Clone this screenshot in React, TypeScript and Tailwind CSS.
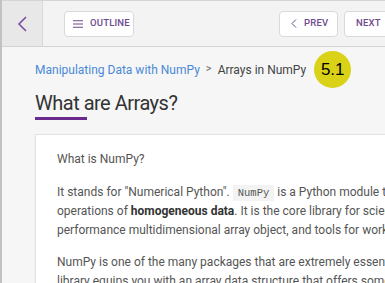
import React from 'react';

const purple = 'text-[#6e4a8e]';

function NavButton({ children, className = '' }: { children: React.ReactNode; className?: string }) {
  return (
    <button
      className={`h-[26px] flex items-center gap-[7px] bg-white border border-[#d9d9d9] rounded-[4px] text-[9.5px] font-medium tracking-[0.2px] ${purple} ${className}`}
    >
      {children}
    </button>
  );
}

export default function App() {
  return (
    <div className="w-[385px] h-[283px] overflow-hidden bg-[#f6f6f6] border-l-2 border-[#c2c2c2] font-['Roboto',sans-serif]">
      {/* top bar */}
      <div className="h-[47px] flex bg-[#f3f3f3] border-t border-b border-[#d4d4d4]">
        <div className="w-[41px] shrink-0 flex items-center justify-center bg-[#e8e8e8] border-r border-[#dadada]">
          <svg width="12" height="16" viewBox="0 0 12 16" fill="none">
            <path d="M10 1 L3 8 L10 15" stroke="#7a4f9e" strokeWidth="1.6" />
          </svg>
        </div>
        <div className="flex-1 flex items-center pl-[21px] pr-0 gap-[6px]">
          <NavButton className="w-[70px] pl-[8px]">
            <svg width="10" height="8" viewBox="0 0 10 8">
              <path d="M0 0.75H10M0 4H10M0 7.25H10" stroke="#6e4a8e" strokeWidth="1.1" />
            </svg>
            OUTLINE
          </NavButton>
          <div className="flex-1" />
          <NavButton className="w-[59px] pl-[11px]">
            <svg width="6" height="9" viewBox="0 0 6 9" fill="none">
              <path d="M5 0.5 L1 4.5 L5 8.5" stroke="#6e4a8e" strokeWidth="1" />
            </svg>
            PREV
          </NavButton>
          <NavButton className="w-[60px] pl-[11px] -mr-[19px]">NEXT</NavButton>
        </div>
      </div>

      {/* content */}
      <div className="pl-[33px]">
        <div className="flex items-center h-[45px] text-[12px] whitespace-nowrap">
          <span className="text-[#4a89d6]">Manipulating Data with NumPy</span>
          <span className="text-[#666] mx-[6px] text-[11px]">&gt;</span>
          <span className="text-[#444]">Arrays in NumPy</span>
          <span className="ml-[8px] w-[37px] h-[37px] rounded-full bg-[#d9d217] flex items-center justify-center text-[17px] text-black font-['Liberation_Sans',sans-serif]">
            5.1
          </span>
        </div>
        <h1 className="text-[20px] leading-[26px] tracking-[-0.5px] text-[#333] whitespace-nowrap mt-[-2px]">What are Arrays?</h1>
        <div className="w-[52px] h-[3px] bg-[#6b2b8c] mt-[1px]" />

        <div className="mt-[14px] w-[420px] bg-white border border-[#e3e3e3] shadow-[0_1px_2px_rgba(0,0,0,0.06)] pl-[21px] pt-[15px] text-[12px] leading-[18.5px] text-[#555] whitespace-nowrap">
          <p>What is NumPy?</p>
          <p className="mt-[14px]">
            It stands for "Numerical Python".{' '}
            <code className="bg-[#f3f3f3] px-[5px] py-[2px] text-[10.5px] font-['Liberation_Mono',monospace] text-[#555]">NumPy</code>{' '}
            is a Python module that
          </p>
          <p>
            operations of <b className="text-[#333]">homogeneous data</b>. It is the core library for scientific
          </p>
          <p>performance multidimensional array object, and tools for working</p>
          <p className="mt-[14px]">NumPy is one of the many packages that are extremely essential</p>
          <p>library equips you with an array data structure that offers some</p>
        </div>
      </div>
    </div>
  );
}
